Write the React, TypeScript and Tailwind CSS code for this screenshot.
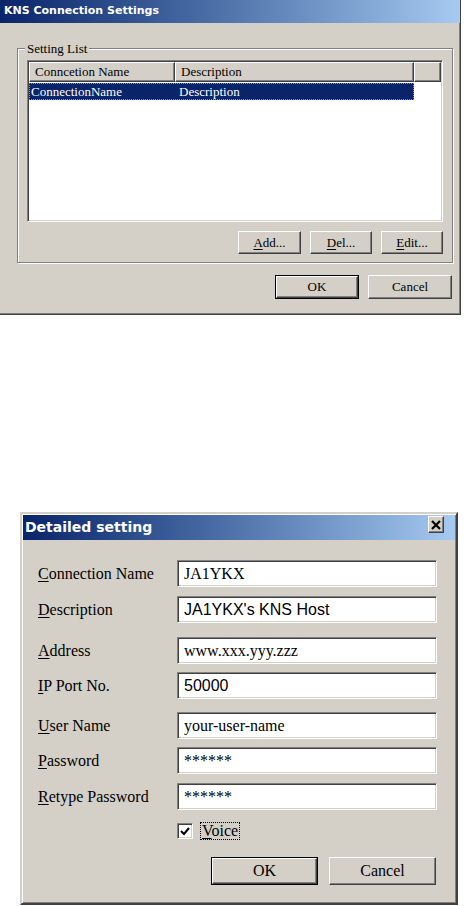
import React from "react";

const serif = "font-['Liberation_Serif',serif]";
const raised =
  "border border-t-white border-l-white border-r-[#404040] border-b-[#404040] shadow-[inset_-1px_-1px_0_#808080]";
const sunken =
  "border border-t-[#808080] border-l-[#808080] border-b-white border-r-white shadow-[inset_1px_1px_0_#404040,inset_-1px_-1px_0_#d4d0c8]";

function Btn({ w, h, def, children }: { w: string; h: string; def?: boolean; children: React.ReactNode }) {
  if (def) {
    return (
      <div className={`${w} ${h} border border-black flex`}>
        <div className={`flex-1 ${raised} flex items-center justify-center text-black ${serif}`}>{children}</div>
      </div>
    );
  }
  return <div className={`${w} ${h} ${raised} flex items-center justify-center text-black ${serif}`}>{children}</div>;
}

function Key({ c }: { c: string }) {
  return <span className="underline underline-offset-2">{c}</span>;
}

function Field({
  label,
  value,
  mt,
  font,
}: {
  label: React.ReactNode;
  value: string;
  mt: string;
  font: string;
}) {
  return (
    <div className={`flex items-center ${mt}`}>
      <div className={`w-[154px] pl-[15px] text-[16px] text-black ${serif}`}>{label}</div>
      <div className={`w-[260px] h-[27px] bg-white ${sunken} flex items-center pl-[6px] text-black ${font}`}>{value}</div>
    </div>
  );
}

export default function App() {
  return (
    <div className="w-[469px] h-[906px] bg-white overflow-hidden">
      {/* KNS Connection Settings */}
      <div className="w-[461px] h-[315px] bg-[#d4d0c8] border-r border-b border-r-[#404040] border-b-[#404040] shadow-[inset_-1px_-1px_0_#808080] flex flex-col">
        <div className="h-[23px] bg-gradient-to-r from-[#0a246a] to-[#a6caf0] flex items-center pl-[4px] text-white font-bold text-[11px] font-['DejaVu_Sans',sans-serif]">
          KNS Connection Settings
        </div>
        <div className="relative ml-[17px] mt-[25px] w-[436px] h-[215px] border border-[#808080] shadow-[1px_1px_0_#fff,inset_1px_1px_0_#fff]">
          <span className={`absolute left-[7px] -top-[10px] px-[2px] bg-[#d4d0c8] text-[13px] text-black ${serif}`}>Setting List</span>
          <div className={`ml-[9px] mt-[11px] w-[416px] h-[162px] bg-white ${sunken} flex flex-col p-[1px] text-[13px] ${serif}`}>
            <div className="flex h-[20px] bg-[#d4d0c8]">
              <div className={`w-[146px] ${raised} flex items-center pl-[5px] text-black`}>Conncetion Name</div>
              <div className={`w-[239px] ${raised} flex items-center pl-[5px] text-black`}>Description</div>
              <div className={`flex-1 ${raised}`} />
            </div>
            <div className="mt-[1px] w-[385px] h-[17px] bg-[#0a246a] text-white flex items-center border border-dotted border-[#8a8fb0]">
              <span className="w-[145px] pl-[1px]">ConnectionName</span>
              <span className="pl-[4px]">Description</span>
            </div>
          </div>
          <div className="flex justify-end gap-[9px] pr-[9px] mt-[9px] text-[13px]">
            <Btn w="w-[63px]" h="h-[23px]">
              <Key c="A" />dd...
            </Btn>
            <Btn w="w-[62px]" h="h-[23px]">
              <Key c="D" />el...
            </Btn>
            <Btn w="w-[62px]" h="h-[23px]">
              <Key c="E" />dit...
            </Btn>
          </div>
        </div>
        <div className="flex justify-end gap-[9px] pr-[8px] mt-[12px] text-[13px]">
          <Btn w="w-[84px]" h="h-[24px]" def>
            OK
          </Btn>
          <Btn w="w-[84px]" h="h-[24px]">
            Cancel
          </Btn>
        </div>
      </div>

      {/* Detailed setting */}
      <div className="ml-[20px] mt-[197px] w-[438px] h-[393px] bg-[#d4d0c8] border-2 border-t-[#d4d0c8] border-l-[#d4d0c8] border-r-[#404040] border-b-[#404040] shadow-[inset_1px_1px_0_#fff,inset_-1px_-1px_0_#808080] p-[1px] flex flex-col">
        <div className="h-[25px] bg-gradient-to-r from-[#0a246a] to-[#a6caf0] flex items-start justify-between">
          <span className="pl-[2px] mt-[3px] text-white font-bold text-[14px] leading-[18px] font-['DejaVu_Sans',sans-serif]">
            Detailed setting
          </span>
          <div className={`mr-[11px] mt-[1px] w-[16px] h-[17px] bg-[#d4d0c8] ${raised} flex items-center justify-center`}>
            <svg width="10" height="10" viewBox="0 0 10 10">
              <path d="M1 1 L9 9 M9 1 L1 9" stroke="#000" strokeWidth="2.2" />
            </svg>
          </div>
        </div>
        <Field mt="mt-[20px]" label={<><Key c="C" />onnection Name</>} value="JA1YKX" font={`text-[16px] ${serif}`} />
        <Field mt="mt-[9px]" label={<><Key c="D" />escription</>} value="JA1YKX's KNS Host" font="text-[16px] font-['Liberation_Sans',sans-serif]" />
        <Field mt="mt-[14px]" label={<><Key c="A" />ddress</>} value="www.xxx.yyy.zzz" font={`text-[16px] ${serif}`} />
        <Field mt="mt-[8px]" label={<><Key c="I" />P Port No.</>} value="50000" font="text-[16px] font-['Liberation_Sans',sans-serif]" />
        <Field mt="mt-[13px]" label={<><Key c="U" />ser Name</>} value="your-user-name" font={`text-[16px] ${serif}`} />
        <Field mt="mt-[8px]" label={<><Key c="P" />assword</>} value="******" font={`text-[16px] ${serif}`} />
        <Field mt="mt-[9px]" label={<><Key c="R" />etype Password</>} value="******" font={`text-[16px] ${serif}`} />
        <div className="flex items-center mt-[12px] ml-[154px]">
          <div className={`w-[16px] h-[16px] bg-white ${sunken} flex items-center justify-center`}>
            <svg width="10" height="10" viewBox="0 0 10 10">
              <path d="M1 5 L4 8 L9 2" stroke="#000" strokeWidth="2" fill="none" />
            </svg>
          </div>
          <span className={`ml-[7px] px-[1px] border border-dotted border-black text-[16px] leading-[16px] text-black ${serif}`}>
            <Key c="V" />oice
          </span>
        </div>
        <div className="flex gap-[11px] mt-[17px] ml-[188px] text-[16px]">
          <Btn w="w-[107px]" h="h-[28px]" def>
            OK
          </Btn>
          <Btn w="w-[107px]" h="h-[28px]">
            Cancel
          </Btn>
        </div>
      </div>
    </div>
  );
}
